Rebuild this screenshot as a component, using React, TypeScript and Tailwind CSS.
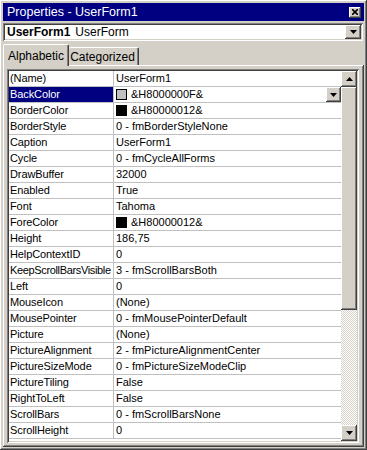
import React from 'react';

const rows: { name: string; value: string; swatch?: string }[] = [
  { name: '(Name)', value: 'UserForm1' },
  { name: 'BackColor', value: '&H8000000F&', swatch: '#c0c0c0' },
  { name: 'BorderColor', value: '&H80000012&', swatch: '#000000' },
  { name: 'BorderStyle', value: '0 - fmBorderStyleNone' },
  { name: 'Caption', value: 'UserForm1' },
  { name: 'Cycle', value: '0 - fmCycleAllForms' },
  { name: 'DrawBuffer', value: '32000' },
  { name: 'Enabled', value: 'True' },
  { name: 'Font', value: 'Tahoma' },
  { name: 'ForeColor', value: '&H80000012&', swatch: '#000000' },
  { name: 'Height', value: '186,75' },
  { name: 'HelpContextID', value: '0' },
  { name: 'KeepScrollBarsVisible', value: '3 - fmScrollBarsBoth' },
  { name: 'Left', value: '0' },
  { name: 'MouseIcon', value: '(None)' },
  { name: 'MousePointer', value: '0 - fmMousePointerDefault' },
  { name: 'Picture', value: '(None)' },
  { name: 'PictureAlignment', value: '2 - fmPictureAlignmentCenter' },
  { name: 'PictureSizeMode', value: '0 - fmPictureSizeModeClip' },
  { name: 'PictureTiling', value: 'False' },
  { name: 'RightToLeft', value: 'False' },
  { name: 'ScrollBars', value: '0 - fmScrollBarsNone' },
  { name: 'ScrollHeight', value: '0' },
];

const raised = 'shadow-[inset_-1px_-1px_#404040,inset_1px_1px_#ffffff,inset_-2px_-2px_#808080,inset_2px_2px_#d4d0c8]';
const sunken = 'shadow-[inset_1px_1px_#808080,inset_-1px_-1px_#ffffff,inset_2px_2px_#404040,inset_-2px_-2px_#d4d0c8]';

function Arrow({ up }: { up?: boolean }) {
  return (
    <svg width="7" height="4" viewBox="0 0 7 4">
      <path d={up ? 'M3.5 0 L7 4 L0 4 Z' : 'M0 0 L7 0 L3.5 4 Z'} fill="#000" />
    </svg>
  );
}

function Btn({ up, className }: { up?: boolean; className: string }) {
  return (
    <div className={`bg-[#d4d0c8] flex items-center justify-center ${raised} ${className}`}>
      <Arrow up={up} />
    </div>
  );
}

export default function App() {
  return (
    <div
      className={`w-[367px] h-[450px] bg-[#d4d0c8] p-[3px] flex flex-col text-[11px] text-black ${raised}`}
      style={{ fontFamily: '"Liberation Sans", Arial, sans-serif' }}
    >
      {/* Title bar */}
      <div className="h-[18px] bg-[#000080] flex items-center justify-between pl-[4px] pr-[3px]">
        <span className="text-white text-[12.5px] leading-none">Properties - UserForm1</span>
        <div className={`w-[12px] h-[11px] bg-[#d4d0c8] flex items-center justify-center ${raised}`}>
          <svg width="6" height="6" viewBox="0 0 6 6">
            <path d="M0 0 L6 6 M6 0 L0 6" stroke="#000" strokeWidth="1.6" />
          </svg>
        </div>
      </div>

      {/* Object combo */}
      <div className={`mt-[2px] h-[18px] mr-[1px] bg-white flex items-center p-[2px] text-[12px] ${sunken}`}>
        <span className="pl-[2px] font-bold">UserForm1</span>
        <span className="pl-[5px] flex-1">UserForm</span>
        <Btn className="w-[16px] h-[14px]" />
      </div>

      {/* Tabs */}
      <div className="mt-[2px] h-[22px] flex items-end text-[12px]">
        <div className="h-[22px] w-[66px] bg-[#d4d0c8] border-t border-l border-white border-r border-r-[#404040] shadow-[inset_-1px_0_#808080] rounded-t-[2px] flex items-center justify-center relative z-10 -mb-px">
          Alphabetic
        </div>
        <div className="h-[18px] w-[70px] bg-[#d4d0c8] border-t border-white border-r border-r-[#404040] shadow-[inset_-1px_0_#808080] rounded-t-[2px] flex items-center justify-center pt-[1px] pr-[2px]">
          Categorized
        </div>
      </div>

      {/* Tab panel */}
      <div className={`flex-1 min-h-0 flex pt-[4px] pl-[4px] pr-[5px] pb-[4px] ${raised}`}>
        <div className={`flex-1 min-h-0 flex p-[2px] ${sunken}`}>
          <div className="flex-1 min-w-0 bg-white overflow-hidden">
            {rows.map((r, i) => {
              const sel = i === 1;
              const long = r.name.length > 18;
              return (
                <div key={r.name} className="h-[16px] flex leading-[15px]">
                  <div className={`w-[105px] shrink-0 border-b border-r border-[#c0c0c0] pl-[1px] whitespace-nowrap overflow-hidden ${long ? 'tracking-[-0.35px]' : 'tracking-[-0.1px]'} ${sel ? 'bg-[#000080] text-white' : ''}`}>
                    {r.name}
                  </div>
                  <div className="flex-1 border-b border-[#c0c0c0] pl-[2px] flex items-center whitespace-nowrap overflow-hidden">
                    {r.swatch && (
                      <span className="w-[11px] h-[11px] border border-black mr-[4px] shrink-0" style={{ background: r.swatch }} />
                    )}
                    <span className="flex-1">{r.value}</span>
                    {sel && <Btn className="w-[15px] h-[15px] self-start" />}
                  </div>
                </div>
              );
            })}
          </div>

          {/* Scrollbar */}
          <div className="w-[16px] flex flex-col">
            <Btn up className="h-[16px]" />
            <div className={`h-[223px] bg-[#d4d0c8] ${raised}`} />
            <div className="flex-1 bg-[repeating-conic-gradient(#d4d0c8_0_25%,#ffffff_0_50%)] bg-[length:2px_2px]" />
            <Btn className="h-[16px]" />
          </div>
        </div>
      </div>
    </div>
  );
}
